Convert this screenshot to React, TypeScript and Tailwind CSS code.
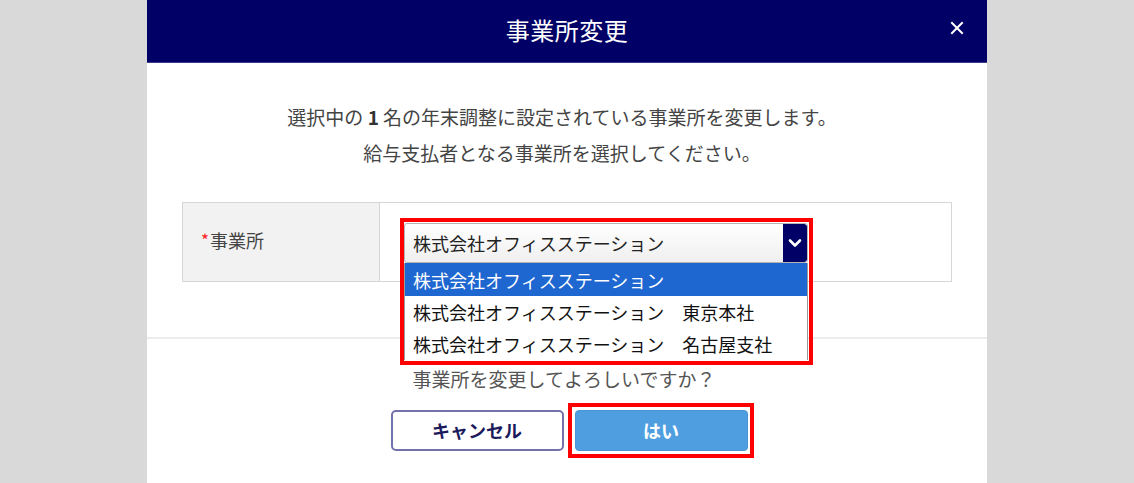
import React from "react";

const FONT = { fontFamily: '"Noto Sans CJK JP", "Noto Sans", sans-serif' };

export default function App() {
  const options = [
    "株式会社オフィスステーション",
    "株式会社オフィスステーション　東京本社",
    "株式会社オフィスステーション　名古屋支社",
  ];
  return (
    <div
      className="w-[1134px] h-[483px] bg-[#d9d9d9] flex justify-center overflow-hidden"
      style={FONT}
    >
      <div className="w-[840px] h-[483px] bg-white flex flex-col">
        {/* header */}
        <div className="relative h-[63px] shrink-0 bg-[#000066] border-b border-[#3a3a8a] flex items-center justify-center">
          <span className="text-white text-[24px] leading-none tracking-[0.5px] pb-[3px]">事業所変更</span>
          <button className="absolute right-[22px] top-[20px] w-[16px] h-[16px] flex items-center justify-center">
            <svg width="14" height="14" viewBox="0 0 14 14">
              <path d="M2 2 L12 12 M12 2 L2 12" stroke="#ffffff" strokeWidth="2" strokeLinecap="square" />
            </svg>
          </button>
        </div>

        {/* message */}
        <div className="pt-[36px] pr-[10px] flex flex-col items-center text-[#444] text-[19px] leading-[36px]">
          <p>
            選択中の <span className="font-bold text-[#333]">1</span> 名の年末調整に設定されている事業所を変更します。
          </p>
          <p>給与支払者となる事業所を選択してください。</p>
        </div>

        {/* form table */}
        <div className="mt-[31px] mx-[35px] h-[80px] flex border border-[#d6d6d6]">
          <div className="w-[197px] shrink-0 bg-[#f2f2f2] border-r border-[#d6d6d6] pl-[18px] pt-[25px] text-[18px] leading-[24px] text-[#444]">
            <span className="text-[#ff2222] align-top text-[17px] mr-[1px]">*</span>事業所
          </div>
          <div className="flex-1 pl-[24px] pt-[20px]">
            <div className="relative w-[404px]">
              {/* select */}
              <div className="h-[40px] flex border border-[#b5b5b5] rounded-[3px] bg-gradient-to-b from-white to-[#efefef] overflow-hidden">
                <div className="flex-1 pl-[8px] flex items-center text-[18px] text-[#222] leading-none">
                  株式会社オフィスステーション
                </div>
                <div className="w-[24px] bg-[#000066] flex items-center justify-center rounded-r-[3px]">
                  <svg width="14" height="10" viewBox="0 0 14 10">
                    <path d="M2 2.5 L7 7.5 L12 2.5" fill="none" stroke="#ffffff" strokeWidth="2.6" strokeLinecap="round" strokeLinejoin="round" />
                  </svg>
                </div>
              </div>
              {/* dropdown list */}
              <div className="absolute left-0 top-[40px] w-[404px] bg-white z-10 border-x border-[#9a9a9a]">
                {options.map((o, i) => (
                  <div
                    key={o}
                    className={
                      i === 0
                        ? "h-[33px] pl-[8px] flex items-center text-[18px] leading-none bg-[#1e66d0] text-white"
                        : "h-[32px] pl-[8px] flex items-center text-[18px] leading-none text-[#111]"
                    }
                  >
                    {o}
                  </div>
                ))}
              </div>
              {/* red highlight */}
              <div className="absolute -left-[4px] -right-[5px] -top-[5px] h-[147px] border-[4px] border-[#ff0000] z-20 pointer-events-none" />
            </div>
          </div>
        </div>

        {/* divider */}
        <div className="mt-[55px] border-t-2 border-[#ececec]" />

        {/* footer */}
        <div className="pt-[26px] flex flex-col items-center">
          <p className="text-[19px] leading-[28px] text-[#555] pr-[6px]">事業所を変更してよろしいですか？</p>
          <div className="mt-[17px] flex justify-center gap-[11px] pl-[4px]">
            <button className="w-[173px] h-[41px] rounded-[5px] border-[2px] border-[#7472ad] bg-white text-[#1a1a5c] text-[18px] font-bold">
              キャンセル
            </button>
            <div className="relative">
              <button className="w-[173px] h-[41px] rounded-[4px] bg-[#4f9fe0] border border-[#4a94d4] text-white text-[18px] font-bold">
                はい
              </button>
              <div className="absolute -left-[7px] -right-[6px] -top-[7px] -bottom-[7px] border-[4px] border-[#ff0000] pointer-events-none" />
            </div>
          </div>
        </div>
      </div>
    </div>
  );
}
